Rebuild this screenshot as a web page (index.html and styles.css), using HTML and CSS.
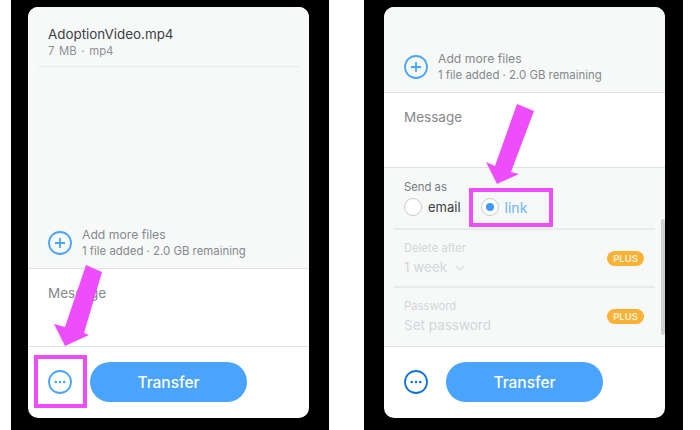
FILE: index.html
```html
<!doctype html>
<html lang="en">
<head>
  <meta charset="UTF-8">
  <meta name="viewport" content="width=device-width, initial-scale=1.0">
  <title>Transfer steps</title>
  <link rel="stylesheet" href="styles.css">
</head>
<body>
  <section class="frame frame-left">
    <div class="card">
      <div class="files">
        <div class="file-row">
          <p class="file-name">AdoptionVideo.mp4</p>
          <p class="file-meta">7 MB · mp4</p>
        </div>
        <div class="add-row">
          <svg class="icon" viewBox="0 0 24 24"><circle cx="12" cy="12" r="11" fill="none" stroke="#4aa4fb" stroke-width="1.8"/><path d="M12 7v10M7 12h10" stroke="#4aa4fb" stroke-width="1.8" fill="none"/></svg>
          <div>
            <p class="add-title">Add more files</p>
            <p class="add-meta">1 file added · 2.0 GB remaining</p>
          </div>
        </div>
      </div>
      <div class="message"><p>Message</p></div>
      <div class="footer">
        <svg class="icon" viewBox="0 0 24 24"><circle cx="12" cy="12" r="11" fill="none" stroke="#4aa4fb" stroke-width="1.8"/><circle cx="7.8" cy="12" r="1.3" fill="#4aa4fb"/><circle cx="12" cy="12" r="1.3" fill="#4aa4fb"/><circle cx="16.2" cy="12" r="1.3" fill="#4aa4fb"/></svg>
        <button class="transfer">Transfer</button>
      </div>
    </div>
    <div class="mark mark-more"></div>
    <svg class="arrow arrow-left" viewBox="0 0 60 90"><polygon points="32,0 48,7 30,68 35,70 11,81 0,59 11,62" fill="#ee4dfb"/></svg>
  </section>

  <section class="frame frame-right">
    <div class="card">
      <div class="files files-short">
        <div class="add-row">
          <svg class="icon" viewBox="0 0 24 24"><circle cx="12" cy="12" r="11" fill="none" stroke="#4aa4fb" stroke-width="1.8"/><path d="M12 7v10M7 12h10" stroke="#4aa4fb" stroke-width="1.8" fill="none"/></svg>
          <div>
            <p class="add-title">Add more files</p>
            <p class="add-meta">1 file added · 2.0 GB remaining</p>
          </div>
        </div>
      </div>
      <div class="message message-short"><p>Message</p></div>
      <div class="options">
        <div class="send-as">
          <p class="option-label">Send as</p>
          <div class="radios">
            <span class="radio"></span><span class="radio-text">email</span>
            <span class="radio radio-on"></span><span class="radio-text radio-text-on">link</span>
          </div>
        </div>
        <div class="option-row">
          <div class="option-text">
            <p class="option-label muted">Delete after</p>
            <p class="option-value">1 week <svg class="chevron" viewBox="0 0 10 6"><path d="M1 1l4 4 4-4" fill="none" stroke="#dcdfe2" stroke-width="1.3"/></svg></p>
          </div>
          <span class="plus">PLUS</span>
        </div>
        <div class="option-row option-last">
          <div class="option-text">
            <p class="option-label muted">Password</p>
            <p class="option-value">Set password</p>
          </div>
          <span class="plus">PLUS</span>
        </div>
        <div class="scrollbar"></div>
      </div>
      <div class="footer">
        <svg class="icon" viewBox="0 0 24 24"><circle cx="12" cy="12" r="11" fill="none" stroke="#1273de" stroke-width="1.8"/><circle cx="7.8" cy="12" r="1.3" fill="#1273de"/><circle cx="12" cy="12" r="1.3" fill="#1273de"/><circle cx="16.2" cy="12" r="1.3" fill="#1273de"/></svg>
        <button class="transfer">Transfer</button>
      </div>
    </div>
    <div class="mark mark-link"></div>
    <svg class="arrow arrow-right" viewBox="0 0 50 82"><polygon points="31,0 48,7 25,68 33,70 11,80 0,58 9,62" fill="#ee4dfb"/></svg>
  </section>
</body>
</html>
```

FILE: styles.css
```css
* {
    margin: 0;
    padding: 0;
    box-sizing: border-box;
    font-family: Inter, "Liberation Sans", sans-serif;
}

body {
    background-color: #fff;
    display: flex;
    gap: 35px;
    padding-left: 11px;
    height: 430px;
    overflow: hidden;
}

.frame {
    position: relative;
    background-color: #000;
    padding-top: 7px;
}

.frame-left {
    width: 318px;
    padding-left: 17px;
}

.frame-right {
    width: 319px;
    padding-left: 20px;
}

.card {
    width: 281px;
    height: 411px;
    background-color: #fff;
    border-radius: 10px;
    overflow: hidden;
    display: flex;
    flex-direction: column;
}

.files {
    height: 262px;
    display: flex;
    flex-direction: column;
    justify-content: space-between;
    background-color: #f7f9f9;
    border-bottom: 1px solid #dfe1e3;
}

.files-short {
    height: 86px;
    justify-content: flex-end;
}

.file-row {
    margin: 0 10px;
    padding: 18px 10px 0;
    height: 60px;
    border-bottom: 1px solid #e8eaf2;
}

.file-name {
    font-size: 13.4px;
    line-height: 18px;
    color: #3c4043;
}

.file-meta {
    font-size: 11.3px;
    line-height: 16px;
    word-spacing: 1.5px;
    color: #8d9094;
}

.add-row {
    display: flex;
    align-items: center;
    gap: 10px;
    padding: 0 0 9px 20px;
}

.icon {
    width: 24px;
    height: 24px;
    flex: none;
}

.add-title {
    font-size: 12.2px;
    line-height: 17px;
    color: #85888c;
}

.add-meta {
    font-size: 11.4px;
    line-height: 16px;
    color: #85888c;
}

.message {
    height: 78px;
    padding: 15px 20px;
    border-bottom: 1px solid #dfe1e3;
    font-size: 13.5px;
    line-height: 18px;
    color: #85888c;
}

.message-short {
    height: 75px;
}

.options {
    position: relative;
    height: 179px;
    background-color: #f7f9f9;
    border-bottom: 1px solid #dfe1e3;
}

.send-as {
    height: 62px;
    margin: 0 10px;
    padding: 12px 10px 0;
    border-bottom: 2px solid #e8eaed;
}

.option-label {
    font-size: 11.3px;
    line-height: 14px;
    color: #76797d;
}

.radios {
    display: flex;
    align-items: center;
    margin-top: 4px;
}

.radio {
    width: 18px;
    height: 18px;
    border-radius: 50%;
    border: 1px solid #c9cbcd;
    background-color: #fff;
    display: flex;
    align-items: center;
    justify-content: center;
}

.radio-on::after {
    content: "";
    width: 8px;
    height: 8px;
    border-radius: 50%;
    background-color: #3d9bfb;
}

.radio-text {
    font-size: 13px;
    color: #3c4043;
    margin: 0 20px 0 6px;
}

.radio-text-on {
    font-size: 14px;
    color: #6db4fa;
}

.option-row {
    height: 58px;
    margin: 0 10px;
    padding: 0 11px 0 10px;
    display: flex;
    justify-content: space-between;
    align-items: center;
    border-bottom: 2px solid #e8eaed;
}

.option-text {
    padding-top: 4px;
}

.option-last {
    border-bottom-color: transparent;
}

.muted {
    color: #d3d6d9;
}

.option-value {
    font-size: 13.5px;
    line-height: 24px;
    color: #d3d6d9;
}

.chevron {
    width: 10px;
    height: 6px;
    margin-left: 4px;
    vertical-align: 1px;
}

.plus {
    width: 37px;
    height: 15px;
    border-radius: 8px;
    background-color: #fbb135;
    color: #fdf3dc;
    font-size: 9.5px;
    font-weight: 600;
    line-height: 15px;
    text-align: center;
}

.scrollbar {
    position: absolute;
    right: 0;
    top: 51px;
    width: 4px;
    height: 116px;
    border-radius: 2px;
    background-color: #cfd1d3;
}

.footer {
    height: 71px;
    display: flex;
    align-items: center;
    gap: 18px;
    padding: 0 0 1px 20px;
}

.transfer {
    width: 157px;
    height: 40px;
    border: none;
    border-radius: 20px;
    background-color: #4aa4fb;
    color: #fff;
    font-size: 15.5px;
    font-weight: 500;
}

/* annotations drawn over the screenshot */
.mark {
    position: absolute;
    border: 4px solid #ee4dfb;
}

.mark-more {
    left: 23px;
    top: 355px;
    width: 53px;
    height: 53px;
}

.mark-link {
    left: 105px;
    top: 188px;
    width: 84px;
    height: 39px;
}

.arrow {
    position: absolute;
}

.arrow-left {
    left: 43px;
    top: 265px;
    width: 60px;
    height: 90px;
}

.arrow-right {
    left: 122px;
    top: 104px;
    width: 50px;
    height: 82px;
}
```
